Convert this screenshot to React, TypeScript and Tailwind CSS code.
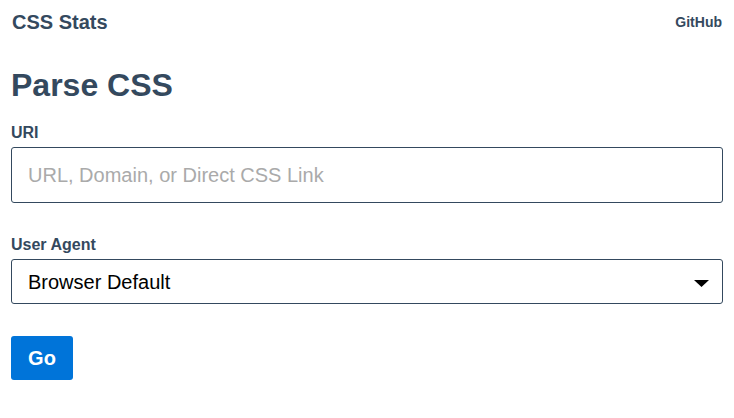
import React from "react";

export default function App() {
  return (
    <div className="min-h-[418px] bg-white text-[#34495e]" style={{ fontFamily: '"Liberation Sans", Arial, sans-serif' }}>
      <header className="flex items-center justify-between px-3 pt-[10px]">
        <a className="text-[20px] font-bold leading-[24px]">CSS Stats</a>
        <a className="text-[14px] font-bold leading-[24px]">GitHub</a>
      </header>
      <main className="px-[11px]">
        <h1 className="mt-[31px] text-[32px] font-bold leading-[40px]">Parse CSS</h1>
        <label className="mt-[18px] block text-[16px] font-bold leading-[20px]">URI</label>
        <input
          className="mt-[4px] block h-[56px] w-full rounded-[3px] border border-[#34495e] px-4 text-[20px] text-black placeholder:text-[#aaaaaa] outline-none"
          placeholder="URL, Domain, or Direct CSS Link"
        />
        <label className="mt-[32px] block text-[16px] font-bold leading-[20px]">User Agent</label>
        <div className="relative mt-[4px] flex h-[45px] w-full items-center rounded-[3px] border border-[#34495e] px-4 text-[20px] text-black">
          <span>Browser Default</span>
          <svg className="absolute right-[13px] top-[20px]" width="15" height="7" viewBox="0 0 15 7">
            <path d="M0 0 L15 0 L7.5 7 Z" fill="#000" />
          </svg>
        </div>
        <button className="mt-[32px] h-[44px] w-[62px] rounded-[3px] bg-[#0074d9] text-[20px] font-bold text-white">Go</button>
      </main>
    </div>
  );
}
